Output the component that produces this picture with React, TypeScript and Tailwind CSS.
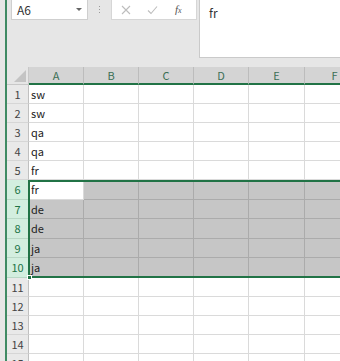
const cols = ["A", "B", "C", "D", "E", "F"]
const widths = ["w-[55px]", "w-[55px]", "w-[55px]", "w-[55px]", "w-[56px]", "w-[60px]"]
const values = ["sw", "sw", "qa", "qa", "fr", "fr", "de", "de", "ja", "ja", "", "", "", "", ""]

const font = { fontFamily: '"Noto Sans CJK JP", "Liberation Sans", sans-serif' }

const Row = ({ n, value }: { n: number; value: string }) => {
    const selected = n >= 6 && n <= 10
    const tall = n === 6 || n === 10 || n === 8
    return (
        <div className={`flex shrink-0 ${tall ? "h-[20px]" : "h-[19px]"}`}>
            <div
                className={`w-[22px] shrink-0 flex items-center justify-center text-[11px] border-b border-r ${
                    selected
                        ? "bg-[#d3eedf] text-[#217346] border-[#b9d8c6]"
                        : "bg-[#e9e9e9] text-[#444] border-[#d6d6d6] border-r-[#c0c0c0]"
                }`}
            >
                {n}
            </div>
            {cols.map((c, i) => {
                const active = n === 6 && i === 0
                const gray = selected && !active
                return (
                    <div
                        key={c}
                        className={`${widths[i]} shrink-0 border-r border-b pl-[2px] flex items-center text-[11px] text-[#222] ${
                            gray ? "bg-[#c6c6c6] border-[#ababab]" : "bg-white border-[#dadada]"
                        }`}
                    >
                        {i === 0 ? value : ""}
                    </div>
                )
            })}
        </div>
    )
}

export default function App() {
    return (
        <div className="w-[340px] h-[361px] overflow-hidden bg-[#e6e6e6] flex" style={font}>
            <div className="w-[5px] shrink-0" />
            <div className="w-[2px] shrink-0 bg-[#3f8a63]" />
            <div className="flex-1 flex flex-col min-w-0">
                {/* toolbar */}
                <div className="flex h-[67px] shrink-0 items-start">
                    <div className="ml-[4px] mt-[-1px] w-[77px] h-[21px] bg-white border border-[#cfcfcf] flex items-center justify-between pl-[5px] pr-[5px] text-[12px] text-[#333]">
                        <span>A6</span>
                        <span className="w-0 h-0 border-l-[3px] border-r-[3px] border-t-[3px] border-l-transparent border-r-transparent border-t-[#666]" />
                    </div>
                    <div className="ml-[11px] mt-[6px] flex flex-col gap-[2px]">
                        <span className="w-[1px] h-[1px] bg-[#9a9a9a]" />
                        <span className="w-[1px] h-[1px] bg-[#9a9a9a]" />
                        <span className="w-[1px] h-[1px] bg-[#9a9a9a]" />
                    </div>
                    <div className="ml-[11px] mt-[-1px] w-[86px] h-[21px] bg-white border border-[#d6d6d6] flex items-center text-[#b5b5b5]">
                        <svg width="10" height="10" viewBox="0 0 10 10" className="ml-[9px]">
                            <path d="M1 1L9 9M9 1L1 9" stroke="#bdbdbd" strokeWidth="1.1" fill="none" />
                        </svg>
                        <svg width="11" height="10" viewBox="0 0 11 10" className="ml-[16px]">
                            <path d="M1 5.5L4 8.5L10 1.5" stroke="#bdbdbd" strokeWidth="1.1" fill="none" />
                        </svg>
                        <span
                            className="ml-[17px] text-[11px] italic text-[#555]"
                            style={{ fontFamily: '"Liberation Serif", serif' }}
                        >
                            f<span className="text-[8px]">x</span>
                        </span>
                    </div>
                    <div className="ml-[2px] mt-[-1px] flex-1 h-[59px] bg-white border-l border-b border-[#cacaca] pl-[9px] pt-[5px] text-[12px] text-[#333]">
                        fr
                    </div>
                </div>
                {/* grid */}
                <div className="relative flex flex-col">
                    <div className="flex h-[18px] shrink-0">
                        <div className="w-[22px] shrink-0 bg-[#e6e6e6] border-r border-b border-[#c8c8c8] relative">
                            <span
                                className="absolute right-[2px] bottom-[2px] w-0 h-0"
                                style={{ borderBottom: "12px solid #c4c4c4", borderLeft: "12px solid transparent" }}
                            />
                        </div>
                        {cols.map((c, i) => (
                            <div
                                key={c}
                                className={`${widths[i]} shrink-0 bg-[#d4d4d4] border-r border-[#bcbcbc] border-b-2 border-b-[#217346] flex items-center justify-center text-[11px] text-[#3b6f55]`}
                            >
                                {c}
                            </div>
                        ))}
                    </div>
                    {values.map((v, i) => (
                        <Row key={i} n={i + 1} value={v} />
                    ))}
                    <div className="absolute left-[21px] top-[113px] w-[340px] h-[98px] border-2 border-[#217346] pointer-events-none" />
                    <div className="absolute left-[20px] top-[208px] w-[5px] h-[5px] bg-[#217346] border border-white" />
                </div>
            </div>
        </div>
    )
}
